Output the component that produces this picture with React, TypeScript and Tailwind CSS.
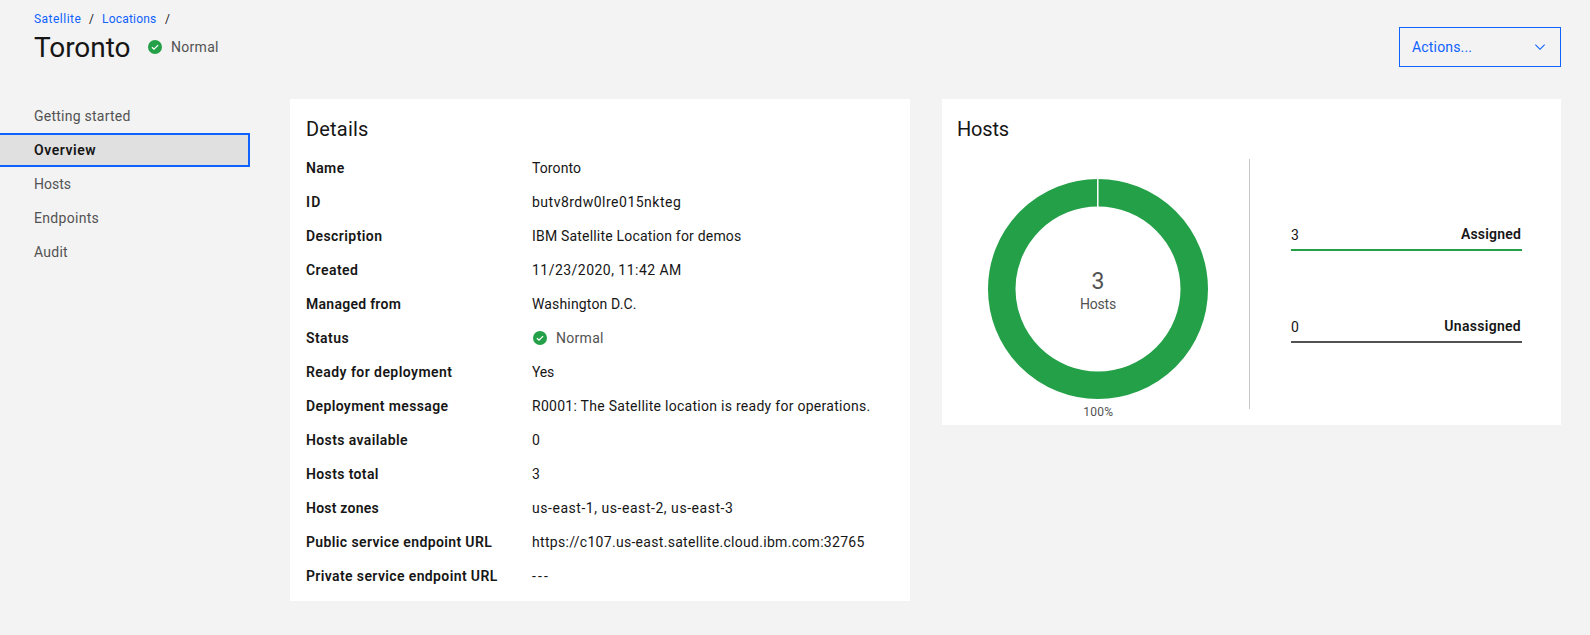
import React from "react";

function StatusIcon() {
  return (
    <svg width="16" height="16" viewBox="0 0 16 16" className="shrink-0">
      <circle cx="8" cy="8" r="7" fill="#24a148" />
      <path d="M4.9 8.2 7 10.2 11.1 6.1" fill="none" stroke="#fff" strokeWidth="1.3" />
    </svg>
  );
}

const nav = [
  { label: "Getting started", cls: "tracking-[0.24px]" },
  { label: "Overview", cls: "tracking-[0.55px]", active: true },
  { label: "Hosts", cls: "tracking-[0px]" },
  { label: "Endpoints", cls: "tracking-[0.3px]" },
  { label: "Audit", cls: "tracking-[0.25px]" },
];

type Row = { label: string; labelCls: string; value: string; valueCls: string; status?: boolean };

const details: Row[] = [
  { label: "Name", labelCls: "tracking-[0.35px]", value: "Toronto", valueCls: "tracking-[0.1px]" },
  { label: "ID", labelCls: "tracking-[1.2px]", value: "butv8rdw0lre015nkteg", valueCls: "tracking-[0.49px]" },
  { label: "Description", labelCls: "tracking-[0.42px]", value: "IBM Satellite Location for demos", valueCls: "tracking-[0.19px]" },
  { label: "Created", labelCls: "tracking-[0.45px]", value: "11/23/2020, 11:42 AM", valueCls: "tracking-[0.47px]" },
  { label: "Managed from", labelCls: "tracking-[0.27px]", value: "Washington D.C.", valueCls: "tracking-[0.15px]" },
  { label: "Status", labelCls: "tracking-[0.42px]", value: "Normal", valueCls: "tracking-[0.3px]", status: true },
  { label: "Ready for deployment", labelCls: "tracking-[0.44px]", value: "Yes", valueCls: "tracking-[-0.19px]" },
  { label: "Deployment message", labelCls: "tracking-[0.37px]", value: "R0001: The Satellite location is ready for operations.", valueCls: "tracking-[0.275px]" },
  { label: "Hosts available", labelCls: "tracking-[0.39px]", value: "0", valueCls: "" },
  { label: "Hosts total", labelCls: "tracking-[0.37px]", value: "3", valueCls: "" },
  { label: "Host zones", labelCls: "tracking-[0.22px]", value: "us-east-1, us-east-2, us-east-3", valueCls: "tracking-[0.54px]" },
  { label: "Public service endpoint URL", labelCls: "tracking-[0.38px]", value: "https://c107.us-east.satellite.cloud.ibm.com:32765", valueCls: "tracking-[0.3px]" },
  { label: "Private service endpoint URL", labelCls: "tracking-[0.38px]", value: "---", valueCls: "tracking-[2.1px]" },
];

function Header() {
  return (
    <header className="flex h-[99px] items-start justify-between pl-[34px] pr-[29px]">
      <div className="pt-[11px]">
        <nav className="flex text-xs leading-4 text-[#161616]">
          <a className="w-[55px] tracking-[0.48px] text-[#0f62fe]">Satellite</a>
          <span className="w-[13px]">/</span>
          <a className="w-[63px] tracking-[0.2px] text-[#0f62fe]">Locations</a>
          <span>/</span>
        </nav>
        <div className="mt-[2px] flex h-9 items-center">
          <h1 className="w-[113px] pt-0.5 text-[28px] leading-9 tracking-[-0.06px]">Toronto</h1>
          <StatusIcon />
          <span className="ml-2 text-sm tracking-[0.3px] text-[#525252]">Normal</span>
        </div>
      </div>
      <button className="mt-[27px] flex h-10 w-[162px] items-center justify-between border border-[#0f62fe] px-3 text-sm tracking-[0.17px] text-[#0f62fe]">
        Actions...
        <svg width="16" height="16" viewBox="0 0 16 16">
          <path d="M8 11 3 6l.7-.7L8 9.6l4.3-4.3.7.7z" fill="#0f62fe" />
        </svg>
      </button>
    </header>
  );
}

function SideNav() {
  return (
    <ul className="w-[290px] shrink-0 text-sm">
      {nav.map((item) => (
        <li
          key={item.label}
          className={
            item.active
              ? "flex h-[34px] w-[250px] items-center border-2 border-l-0 border-[#0f62fe] bg-[#e0e0e0] pl-[34px] font-semibold text-[#161616]"
              : "flex h-[34px] w-[250px] items-center pl-[34px] text-[#525252]"
          }
        >
          <span className={item.cls}>{item.label}</span>
        </li>
      ))}
    </ul>
  );
}

function DetailsCard() {
  return (
    <section className="w-[620px] shrink-0 bg-white px-4 pb-2 pt-4">
      <h2 className="mb-2 text-xl leading-7 tracking-[0.19px]">Details</h2>
      <dl className="text-sm">
        {details.map((row) => (
          <div key={row.label} className="flex h-[34px] items-center whitespace-nowrap">
            <dt className={`w-[226px] shrink-0 font-semibold ${row.labelCls}`}>{row.label}</dt>
            <dd className={`flex items-center gap-2 ${row.valueCls} ${row.status ? "text-[#525252]" : ""}`}>
              {row.status && <StatusIcon />}
              {row.value}
            </dd>
          </div>
        ))}
      </dl>
    </section>
  );
}

function HostsCard() {
  return (
    <section className="h-[326px] w-[619px] shrink-0 bg-white px-4 pt-4">
      <h2 className="mb-4 -ml-px text-xl leading-7 tracking-[-0.2px]">Hosts</h2>
      <div className="flex h-[250px]">
        <div className="flex w-[292px] shrink-0 justify-center border-r border-[#c6c6c6]">
          <svg width="240" height="266" viewBox="0 0 240 266" className="mr-[21px] shrink-0 overflow-visible">
            <circle cx="125" cy="130" r="96.25" fill="none" stroke="#24a148" strokeWidth="27.5" />
            <path d="M124.8 19.5v28.5" stroke="#fff" strokeWidth="1.5" />
            <text x="125" y="130" textAnchor="middle" fontSize="23" fill="#525252">3</text>
            <text x="125" y="150" textAnchor="middle" fontSize="14" letterSpacing="-0.2" fill="#525252">Hosts</text>
            <text x="125.3" y="257" textAnchor="middle" fontSize="12" letterSpacing="0.3" fill="#525252">100%</text>
          </svg>
        </div>
        <div className="ml-[41px] w-[231px] pt-[67px] text-sm">
          <div className="flex h-[25px] items-start justify-between border-b-2 border-[#24a148] leading-4">
            <span className="pt-px">3</span>
            <span className="pr-px font-semibold tracking-[0.19px]">Assigned</span>
          </div>
          <div className="mt-[67px] flex h-[25px] items-start justify-between border-b-2 border-[#525252] leading-4">
            <span className="pt-px">0</span>
            <span className="pr-px font-semibold tracking-[0.29px]">Unassigned</span>
          </div>
        </div>
      </div>
    </section>
  );
}

export default function App() {
  return (
    <div className="h-[635px] w-[1590px] overflow-hidden bg-[#f3f3f3] font-['Roboto',sans-serif] text-[#161616]">
      <Header />
      <main className="flex items-start">
        <SideNav />
        <DetailsCard />
        <div className="w-8 shrink-0" />
        <HostsCard />
      </main>
    </div>
  );
}
